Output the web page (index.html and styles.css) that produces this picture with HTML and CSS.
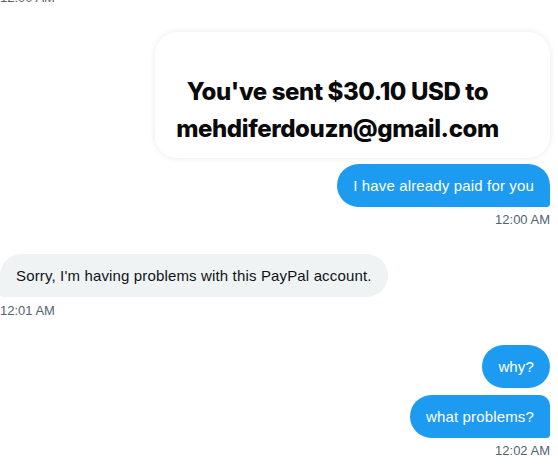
FILE: index.html
```html
<!DOCTYPE html>
<html lang="en">
<head>
<meta charset="utf-8">
<title>Messages</title>
<link rel="stylesheet" href="styles.css">
</head>
<body>
<div class="chat">
  <div class="time time-top">12:00 AM</div>

  <div class="row row-out card-row">
    <div class="card">
      <p class="card-text">You've sent $30.10 USD to<br>mehdiferdouzn@gmail.com</p>
    </div>
  </div>

  <div class="row row-out gap-s">
    <div class="bubble bubble-out tail-out">I have already paid for you</div>
  </div>
  <div class="time time-out">12:00 AM</div>

  <div class="row row-in gap-l">
    <div class="bubble bubble-in tail-in">Sorry, I'm having problems with this PayPal account.</div>
  </div>
  <div class="time time-in">12:01 AM</div>

  <div class="row row-out gap-l">
    <div class="bubble bubble-out">why?</div>
  </div>
  <div class="row row-out gap-m">
    <div class="bubble bubble-out tail-out joined">what problems?</div>
  </div>
  <div class="time time-out">12:02 AM</div>
</div>
</body>
</html>
```

FILE: styles.css
```css
html, body {
  margin: 0;
  padding: 0;
  background: #ffffff;
}

body {
  font-family: "Liberation Sans", Arial, sans-serif;
  overflow: hidden;
}

.chat {
  display: flex;
  flex-direction: column;
  padding: 0 8px 0 0;
  width: 550px;
}

.time {
  font-size: 13px;
  line-height: 16px;
  color: #536471;
  margin-top: 5px;
}

.time-top {
  margin-top: -10px;
}

.time-out {
  text-align: right;
}

.time-in {
  margin-top: 6px;
  text-align: left;
}

.row {
  display: flex;
}

.row-out {
  justify-content: flex-end;
}

.row-in {
  justify-content: flex-start;
}

.card-row {
  margin-top: 26px;
}

.gap-s {
  margin-top: 6px;
}

.gap-m {
  margin-top: 7px;
}

.gap-l {
  margin-top: 26px;
}

.card {
  width: 395px;
  height: 126px;
  box-sizing: border-box;
  background: #ffffff;
  border-radius: 22px;
  box-shadow: 0 0 6px rgba(0, 0, 0, 0.09);
  display: flex;
  align-items: flex-end;
  justify-content: center;
  padding: 0 30px 11px 0;
}

.card-text {
  margin: 0;
  font-family: Inter, Lato, sans-serif;
  font-weight: 800;
  font-size: 24px;
  line-height: 37px;
  color: #0a0a0a;
  text-align: center;
  letter-spacing: -0.4px;
}

.bubble {
  font-size: 15px;
  line-height: 19px;
  padding: 12px 16px;
  border-radius: 24px;
  letter-spacing: 0.15px;
}

.bubble-out {
  background: #1d9bf0;
  color: #ffffff;
}

.bubble-in {
  background: #eff3f4;
  color: #0f1419;
}

.tail-out {
  border-bottom-right-radius: 4px;
}

.tail-in {
  border-bottom-left-radius: 4px;
}

.joined {
  border-top-right-radius: 12px;
}
```
